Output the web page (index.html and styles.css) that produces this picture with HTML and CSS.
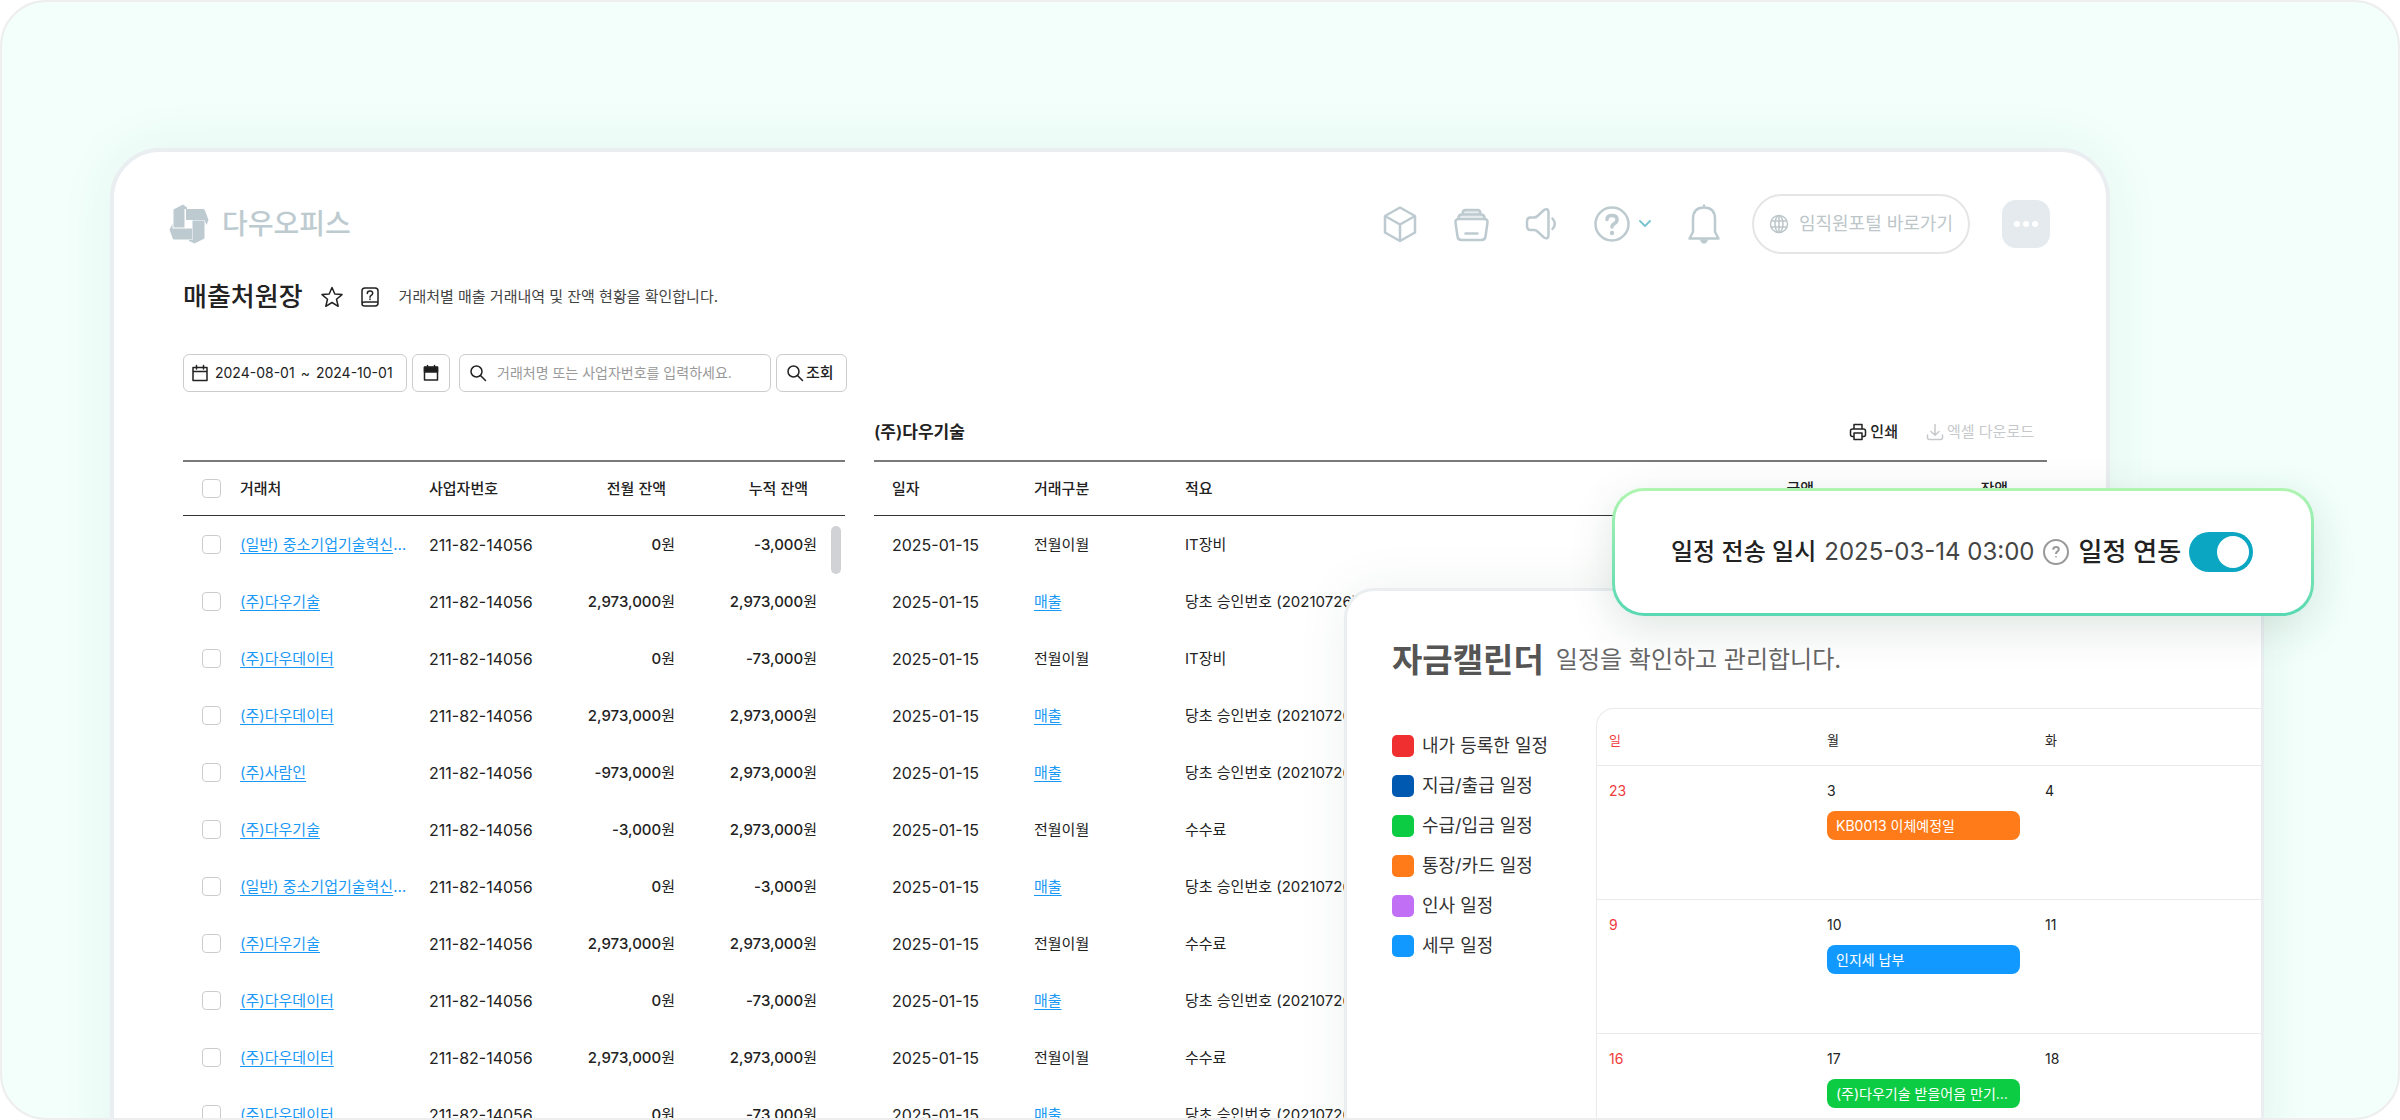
FILE: index.html
```html
<!DOCTYPE html>
<html lang="ko">
<head>
    <meta charset="UTF-8">
    <meta name="viewport" content="width=device-width, initial-scale=1.0">
    <title>매출처원장 - 다우오피스</title>
    <link rel="stylesheet" href="styles.css">
</head>
<body>
    <div class="stage">
        <main class="window">
            <header class="topbar">
                <a href="#" class="logo">
                    <svg width="40" height="40" viewBox="0 0 40 40" fill="#bdcbd0">
                        <path d="M4.500 5.500 L14 0.500 L18 3.500 L18 5 L15.500 5 L15.500 23.500 L4.500 23.500 Z"/>
                        <path d="M17 5 L34 5 Q35.500 5 36 6.500 L39.500 16 L37.500 21 L35.500 16 L17 16 Z"/>
                        <path d="M35.500 16.500 L35.500 34.500 L25.500 39.500 L20 37 L20 36 L23.500 36 L23.500 16.500 Z"/>
                        <path d="M3.500 20 L3.500 24.500 L23 24.500 L23 35.500 L5.500 35.500 Q4 35.500 3.500 34 L0.500 25.500 Z"/>
                    </svg>
                    <span>다우오피스</span>
                </a>
                <nav class="tools">
                    <button class="tool" aria-label="모듈">
                        <svg width="36" height="40" viewBox="0 0 36 40"><path d="M18 3.500 L33 12 V28.500 L18 37 L3 28.500 V12 Z M3 12 L18 20.500 L33 12 M18 20.500 V37"/></svg>
                    </button>
                    <button class="tool" aria-label="보관함">
                        <svg width="36" height="40" viewBox="0 0 36 40"><path d="M6 15 H31 Q35 15 34.500 18.500 L32.500 32.500 Q32 36 28.500 36 H8.500 Q5 36 4.500 32.500 L2.500 18.500 Q2 15 6 15 Z M12.500 29.500 H24.500"/><path d="M5.500 14 Q5.500 10.500 9 10.500 H28 Q31.500 10.500 31.500 14 M9.500 10 Q9.500 6 12.500 6 H24.500 Q27.500 6 27.500 10" fill="#e4eaed"/></svg>
                    </button>
                    <button class="tool" aria-label="공지">
                        <svg width="34" height="40" viewBox="0 0 34 40"><path d="M3 17.500 Q3 13.500 6.500 13.500 H10 Q12 13.500 13.500 12 L20 6 Q24.500 3.500 24.500 8.500 V31 Q24.500 36 20 33.500 L13.500 27.500 Q12 26 10 26 H6.500 Q3 26 3 22 Z M28.500 14.500 Q33 20 28.500 25"/></svg>
                    </button>
                    <button class="tool tool-help" aria-label="도움말">
                        <svg width="38" height="40" viewBox="0 0 38 40"><circle cx="19" cy="20" r="16.500"/><path d="M14 15.500 Q14 11.500 19 11.500 Q24 11.500 24 15.500 Q24 18 21.500 19.500 Q19 21 19 23" stroke-width="3.500"/><circle cx="19" cy="29" r="1"/></svg>
                        <svg class="chevron" width="14" height="10" viewBox="0 0 14 10"><path d="M2 2 L7 7 L12 2"/></svg>
                    </button>
                    <button class="tool" aria-label="알림">
                        <svg width="34" height="44" viewBox="0 0 34 44"><path d="M17 3.500 V5 M2.500 36.500 L6 30 V17 Q6 5.500 17 5.500 Q28 5.500 28 17 V30 L31.500 36.500 Z"/><path d="M14.500 38.500 Q17 42.500 19.500 38.500 Z" fill="#bdcbd0"/></svg>
                    </button>
                    <button class="portal">
                        <svg width="20" height="20" viewBox="0 0 20 20"><circle cx="10" cy="10" r="8.500"/><ellipse cx="10" cy="10" rx="4" ry="8.500"/><path d="M2 7 H18 M2 13 H18 M10 2 V18"/></svg>
                        임직원포털 바로가기
                    </button>
                    <button class="more" aria-label="더보기">
                        <svg width="26" height="8" viewBox="0 0 26 8" fill="#fff"><circle cx="4" cy="4" r="3"/><circle cx="13" cy="4" r="3"/><circle cx="22" cy="4" r="3"/></svg>
                    </button>
                </nav>
            </header>

            <div class="page-title">
                <h1>매출처원장</h1>
                <button class="icon-btn" aria-label="즐겨찾기">
                    <svg width="24" height="24" viewBox="0 0 24 24"><path d="M12 2.500 L14.800 9 L22 9.600 L16.500 14.300 L18.200 21.300 L12 17.500 L5.800 21.300 L7.500 14.300 L2 9.600 L9.200 9 Z"/></svg>
                </button>
                <button class="icon-btn" aria-label="도움말">
                    <svg width="24" height="24" viewBox="0 0 24 24"><path d="M4 18 V6 Q4 3 7 3 H17 Q20 3 20 6 V18 M7 17 H20 V18 Q20 21 17 21 H7 Q4 21 4 19 Q4 17 7 17 Z M9.300 8.500 Q9.300 6 12 6 Q14.700 6 14.700 8.200 Q14.700 9.500 13.200 10.300 Q12 11 12 12.300 M12 14.100 V14.600"/></svg>
                </button>
                <p>거래처별 매출 거래내역 및 잔액 현황을 확인합니다.</p>
            </div>

            <form class="filters">
                <button type="button" class="box date-range">
                    <svg width="18" height="18" viewBox="0 0 18 18"><path d="M2 3.500 H16 V16.500 H2 Z M2 7.500 H16 M5.500 1.500 V5 M12.500 1.500 V5"/></svg>
                    <span>2024-08-01</span>~<span>2024-10-01</span>
                </button>
                <button type="button" class="box calendar-btn" aria-label="날짜 선택">
                    <svg width="18" height="18" viewBox="0 0 18 18"><path d="M2.500 3.500 H15.500 V16 H2.500 Z M5.500 1.500 V4 M12.500 1.500 V4"/><path d="M2.500 3 H15.500 V8 H2.500 Z" fill="#1c1c1e"/></svg>
                </button>
                <label class="box search">
                    <svg width="18" height="18" viewBox="0 0 18 18"><circle cx="7.500" cy="7.500" r="5.500"/><path d="M11.500 11.500 L16.500 16.500"/></svg>
                    <input type="text" aria-label="거래처 검색" placeholder="거래처명 또는 사업자번호를 입력하세요.">
                </label>
                <button type="button" class="box submit">
                    <svg width="18" height="18" viewBox="0 0 18 18"><circle cx="7.500" cy="7.500" r="5.500"/><path d="M11.500 11.500 L16.500 16.500"/></svg>
                    조회
                </button>
            </form>

            <div class="ledger">
                <section class="panel">
                    <div class="panel-head"></div>
                    <table class="accounts">
                        <colgroup><col class="c-check"><col class="c-name"><col class="c-no"><col class="c-prev"><col class="c-sum"><col></colgroup>
                        <thead>
                            <tr><th><input type="checkbox" aria-label="전체 선택"></th><th>거래처</th><th>사업자번호</th><th class="num">전월 잔액</th><th class="num">누적 잔액</th><th></th></tr>
                        </thead>
                        <tbody>
                            <tr><td><input type="checkbox" aria-label="선택"></td><td class="name"><a href="#">(일반) 중소기업기술혁신협회</a></td><td class="code">211-82-14056</td><td class="num"><b>0</b>원</td><td class="num"><b>-3,000</b>원</td><td></td></tr>
                            <tr><td><input type="checkbox" aria-label="선택"></td><td class="name"><a href="#">(주)다우기술</a></td><td class="code">211-82-14056</td><td class="num"><b>2,973,000</b>원</td><td class="num"><b>2,973,000</b>원</td><td></td></tr>
                            <tr><td><input type="checkbox" aria-label="선택"></td><td class="name"><a href="#">(주)다우데이터</a></td><td class="code">211-82-14056</td><td class="num"><b>0</b>원</td><td class="num"><b>-73,000</b>원</td><td></td></tr>
                            <tr><td><input type="checkbox" aria-label="선택"></td><td class="name"><a href="#">(주)다우데이터</a></td><td class="code">211-82-14056</td><td class="num"><b>2,973,000</b>원</td><td class="num"><b>2,973,000</b>원</td><td></td></tr>
                            <tr><td><input type="checkbox" aria-label="선택"></td><td class="name"><a href="#">(주)사람인</a></td><td class="code">211-82-14056</td><td class="num"><b>-973,000</b>원</td><td class="num"><b>2,973,000</b>원</td><td></td></tr>
                            <tr><td><input type="checkbox" aria-label="선택"></td><td class="name"><a href="#">(주)다우기술</a></td><td class="code">211-82-14056</td><td class="num"><b>-3,000</b>원</td><td class="num"><b>2,973,000</b>원</td><td></td></tr>
                            <tr><td><input type="checkbox" aria-label="선택"></td><td class="name"><a href="#">(일반) 중소기업기술혁신협회</a></td><td class="code">211-82-14056</td><td class="num"><b>0</b>원</td><td class="num"><b>-3,000</b>원</td><td></td></tr>
                            <tr><td><input type="checkbox" aria-label="선택"></td><td class="name"><a href="#">(주)다우기술</a></td><td class="code">211-82-14056</td><td class="num"><b>2,973,000</b>원</td><td class="num"><b>2,973,000</b>원</td><td></td></tr>
                            <tr><td><input type="checkbox" aria-label="선택"></td><td class="name"><a href="#">(주)다우데이터</a></td><td class="code">211-82-14056</td><td class="num"><b>0</b>원</td><td class="num"><b>-73,000</b>원</td><td></td></tr>
                            <tr><td><input type="checkbox" aria-label="선택"></td><td class="name"><a href="#">(주)다우데이터</a></td><td class="code">211-82-14056</td><td class="num"><b>2,973,000</b>원</td><td class="num"><b>2,973,000</b>원</td><td></td></tr>
                            <tr><td><input type="checkbox" aria-label="선택"></td><td class="name"><a href="#">(주)다우데이터</a></td><td class="code">211-82-14056</td><td class="num"><b>0</b>원</td><td class="num"><b>-73,000</b>원</td><td></td></tr>
                        </tbody>
                    </table>
                    <span class="scroll-thumb"></span>
                </section>

                <section class="panel">
                    <div class="panel-head">
                        <h2>(주)다우기술</h2>
                        <button class="action">
                            <svg width="18" height="18" viewBox="0 0 18 18"><path d="M5 6 V1.500 H13 V6 M5 13.500 H3.500 Q1.500 13.500 1.500 11.500 V8 Q1.500 6 3.500 6 H14.500 Q16.500 6 16.500 8 V11.500 Q16.500 13.500 14.500 13.500 H13 M5 10 H13 V16.500 H5 Z"/></svg>
                            인쇄
                        </button>
                        <button class="action" disabled>
                            <svg width="18" height="18" viewBox="0 0 18 18"><path d="M9 1.500 V12 M5 8.500 L9 12.300 L13 8.500 M1.500 12 V14.500 Q1.500 16.500 3.500 16.500 H14.500 Q16.500 16.500 16.500 14.500 V12"/></svg>
                            엑셀 다운로드
                        </button>
                    </div>
                    <table class="entries">
                        <colgroup><col class="c-date"><col class="c-type"><col class="c-memo"><col class="c-amount"><col class="c-balance"><col></colgroup>
                        <thead>
                            <tr><th>일자</th><th>거래구분</th><th>적요</th><th class="num">금액</th><th class="num">잔액</th><th></th></tr>
                        </thead>
                        <tbody>
                            <tr><td class="code">2025-01-15</td><td>전월이월</td><td>IT장비</td><td></td><td></td><td></td></tr>
                            <tr><td class="code">2025-01-15</td><td><a href="#">매출</a></td><td>당초 승인번호 (20210726)</td><td></td><td></td><td></td></tr>
                            <tr><td class="code">2025-01-15</td><td>전월이월</td><td>IT장비</td><td></td><td></td><td></td></tr>
                            <tr><td class="code">2025-01-15</td><td><a href="#">매출</a></td><td>당초 승인번호 (20210726)</td><td></td><td></td><td></td></tr>
                            <tr><td class="code">2025-01-15</td><td><a href="#">매출</a></td><td>당초 승인번호 (20210726)</td><td></td><td></td><td></td></tr>
                            <tr><td class="code">2025-01-15</td><td>전월이월</td><td>수수료</td><td></td><td></td><td></td></tr>
                            <tr><td class="code">2025-01-15</td><td><a href="#">매출</a></td><td>당초 승인번호 (20210726)</td><td></td><td></td><td></td></tr>
                            <tr><td class="code">2025-01-15</td><td>전월이월</td><td>수수료</td><td></td><td></td><td></td></tr>
                            <tr><td class="code">2025-01-15</td><td><a href="#">매출</a></td><td>당초 승인번호 (20210726)</td><td></td><td></td><td></td></tr>
                            <tr><td class="code">2025-01-15</td><td>전월이월</td><td>수수료</td><td></td><td></td><td></td></tr>
                            <tr><td class="code">2025-01-15</td><td><a href="#">매출</a></td><td>당초 승인번호 (20210726)</td><td></td><td></td><td></td></tr>
                        </tbody>
                    </table>
                </section>
            </div>
        </main>

        <!-- fund calendar -->
        <aside class="calendar-card">
            <div class="calendar-title">
                <h2>자금캘린더</h2>
                <p>일정을 확인하고 관리합니다.</p>
            </div>
            <div class="calendar-body">
                <ul class="legend">
                    <li><i class="red"></i>내가 등록한 일정</li>
                    <li><i class="navy"></i>지급/출급 일정</li>
                    <li><i class="green"></i>수급/입금 일정</li>
                    <li><i class="orange"></i>통장/카드 일정</li>
                    <li><i class="purple"></i>인사 일정</li>
                    <li><i class="blue"></i>세무 일정</li>
                </ul>
                <div class="month">
                    <table>
                        <thead>
                            <tr><th class="sun">일</th><th>월</th><th>화</th></tr>
                        </thead>
                        <tbody>
                            <tr><td class="sun">23</td><td>3<span class="event orange">KB0013 이체예정일</span></td><td>4</td></tr>
                            <tr><td class="sun">9</td><td>10<span class="event blue">인지세 납부</span></td><td>11</td></tr>
                            <tr><td class="sun">16</td><td>17<span class="event green">(주)다우기술 받을어음 만기도래</span><span class="event blue"></span></td><td>18</td></tr>
                        </tbody>
                    </table>
                </div>
            </div>
        </aside>

        <!-- schedule sync -->
        <div class="sync">
            <strong>일정 전송 일시</strong>
            <time>2025-03-14 03:00</time>
            <svg width="26" height="26" viewBox="0 0 26 26"><circle cx="13" cy="13" r="12"/><path d="M10.200 10.700 Q10.200 8 13 8 Q15.800 8 15.800 10.300 Q15.800 11.700 14.300 12.600 Q13 13.400 13 14.900 M13 17.300 V18.300"/></svg>
            <label class="sync-toggle" for="sync-on">일정 연동</label>
            <input type="checkbox" role="switch" id="sync-on" class="switch" checked>
        </div>
    </div>
</body>
</html>
```
FILE: styles.css
```css
* {
    margin: 0;
    padding: 0;
    box-sizing: border-box;
}

body {
    font-family: Inter, "Noto Sans CJK KR", sans-serif;
    font-size: 15px;
    line-height: 20px;
    color: #222;
    background: #fff;
}

button, input {
    font: inherit;
    color: inherit;
}

button {
    background: none;
    border: none;
    white-space: nowrap;
    cursor: pointer;
}

svg {
    display: block;
    flex: none;
    overflow: visible;
}

a {
    color: #1a98f5;
    text-underline-offset: 3px;
}

.stage {
    position: relative;
    height: 100vh;
    overflow: hidden;
    padding: 146px 288px 0 108px;
    background: #f2fffb;
    border: 2px solid #eee;
    border-radius: 46px;
}

.window {
    height: 1100px;
    padding: 42px 59px 0 69px;
    background: #fff;
    border: 4px solid #eaeef1;
    border-radius: 50px;
    box-shadow: 0 0 60px rgba(40, 110, 70, 0.06);
}

/* top bar */
.topbar {
    display: flex;
    align-items: center;
    justify-content: space-between;
    height: 60px;
    margin: 0 -3px 0 -14px;
}

.logo {
    display: flex;
    align-items: center;
    gap: 13px;
    font-size: 28px;
    font-weight: 500;
    line-height: 40px;
    color: #bdcbd0;
    text-decoration: none;
}

.tools {
    display: flex;
    align-items: center;
}

.tool {
    display: flex;
    align-items: center;
    margin-right: 35px;
}

.tool svg {
    fill: none;
    stroke: #bdcbd0;
    stroke-width: 2.5;
    stroke-linecap: round;
    stroke-linejoin: round;
}

.tool .chevron {
    margin-left: 7px;
    stroke: #7cc5d1;
    stroke-width: 2;
}

.portal {
    display: flex;
    align-items: center;
    gap: 10px;
    height: 60px;
    margin-left: -4px;
    padding: 0 15px;
    font-size: 18px;
    color: #bcc6c9;
    border: 2px solid #e5e5e5;
    border-radius: 30px;
}

.portal svg {
    fill: none;
    stroke: #bcc6c9;
    stroke-width: 1.5;
}

.more {
    display: flex;
    align-items: center;
    justify-content: center;
    width: 48px;
    height: 48px;
    margin-left: 32px;
    background: #e4eaed;
    border-radius: 14px;
}

/* page title */
.page-title {
    display: flex;
    align-items: center;
    height: 40px;
    margin-top: 23px;
}

.page-title h1 {
    margin-right: 17px;
    font-size: 26px;
    font-weight: 500;
    line-height: 40px;
}

.page-title p {
    margin-left: 3px;
    color: #444;
}

.icon-btn {
    margin-right: 14px;
}

.icon-btn svg, .box svg, .action svg {
    fill: none;
    stroke: currentColor;
    stroke-width: 1.5;
    stroke-linejoin: round;
    stroke-linecap: round;
}

/* filters */
.filters {
    display: flex;
    gap: 5px;
    margin-top: 37px;
}

.box {
    display: flex;
    align-items: center;
    gap: 6px;
    height: 38px;
    padding: 0 7px;
    border: 1px solid #ccc;
    border-radius: 6px;
}

.date-range {
    width: 224px;
    font-size: 14px;
}

.calendar-btn {
    width: 38px;
    justify-content: center;
    margin-right: 4px;
}

.search {
    width: 312px;
    gap: 10px;
    padding: 0 9px;
}

.search input {
    flex: 1;
    min-width: 0;
    font-size: 14px;
    border: none;
    outline: none;
}

.search input::placeholder {
    color: #999;
}

.submit {
    width: 71px;
    gap: 2px;
    padding: 0 9px;
    font-weight: 500;
}

/* ledger tables */
.ledger {
    display: grid;
    grid-template-columns: 662fr 1173fr;
    gap: 29px;
}

.panel {
    position: relative;
    min-width: 0;
}

.panel-head {
    display: flex;
    align-items: center;
    gap: 28px;
    height: 68px;
    padding: 12px 13px 0 0;
}

.panel-head h2 {
    margin-right: auto;
    font-size: 17px;
    font-weight: 600;
}

.action {
    display: flex;
    align-items: center;
    gap: 3px;
    font-weight: 500;
}

.action:disabled {
    color: #c6c9cc;
    font-weight: 400;
}

.accounts, .entries {
    width: 100%;
    table-layout: fixed;
    border-collapse: separate;
    border-spacing: 0;
}

.accounts th, .entries th {
    height: 56px;
    text-align: left;
    font-weight: 500;
    border-top: 2px solid #7a7a7a;
    border-bottom: 1px solid #333;
}

.accounts td, .entries td {
    height: 57px;
    white-space: nowrap;
}

.accounts th:first-child, .accounts td:first-child {
    padding-left: 19px;
}

.accounts .num, .entries .num {
    text-align: right;
}

.accounts th.num {
    padding-right: 9px;
}

.accounts b {
    font-weight: 500;
}

.accounts .name {
    overflow: hidden;
    padding-right: 20px;
    text-overflow: ellipsis;
    color: #1a98f5;
}

.accounts .code, .entries .code {
    font-size: 16px;
}

.c-check { width: 57px; }
.c-name { width: 189px; }
.c-no { width: 131px; }
.c-prev { width: 115px; }
.c-sum { width: 142px; }

.entries th:first-child, .entries td:first-child {
    padding-left: 18px;
}

.c-date { width: 160px; }
.c-type { width: 151px; }
.c-memo { width: 481px; }
.c-amount { width: 148px; }
.c-balance { width: 194px; }

.accounts input {
    display: block;
    width: 19px;
    height: 19px;
    appearance: none;
    background: #fff;
    border: 1px solid #ccc;
    border-radius: 4px;
}

.scroll-thumb {
    position: absolute;
    top: 134px;
    right: 4px;
    width: 10px;
    height: 48px;
    background: #d0d2d6;
    border-radius: 5px;
}

/* calendar card */
.calendar-card {
    position: absolute;
    top: 586px;
    right: 134px;
    bottom: -40px;
    width: 920px;
    padding: 46px 0 0 45px;
    overflow: hidden;
    background: #fff;
    border: 3px solid #eaeef1;
    border-radius: 30px;
    box-shadow: 0 0 50px rgba(40, 90, 60, 0.08);
}

.calendar-title {
    display: flex;
    align-items: center;
    gap: 12px;
    height: 46px;
    color: #555;
}

.calendar-title h2 {
    font-size: 33px;
    font-weight: 700;
    line-height: 46px;
}

.calendar-title p {
    font-size: 24px;
    line-height: 46px;
    color: #666;
}

.calendar-body {
    display: flex;
    margin-top: 25px;
}

.legend {
    width: 204px;
    padding-top: 18px;
    list-style: none;
}

.legend li {
    display: flex;
    align-items: center;
    gap: 8px;
    height: 40px;
    font-size: 18px;
    color: #333;
}

.legend i {
    width: 22px;
    height: 22px;
    border-radius: 5px;
}

.red { background: #f03030; }
.navy { background: #0059b0; }
.green { background: #0ccc44; }
.orange { background: #ff7b1a; }
.purple { background: #c170f5; }
.blue { background: #1199ff; }

.month {
    flex: 1;
    border-top: 1px solid #eaeaec;
    border-left: 1px solid #eaeaec;
    border-radius: 18px 0 0 0;
}

.month table {
    width: 100%;
    table-layout: fixed;
    border-collapse: separate;
    border-spacing: 0;
    font-size: 14px;
}

.month th, .month td {
    width: 218px;
    padding-left: 12px;
    text-align: left;
    border-bottom: 1px solid #eaeaec;
}

.month th:last-child, .month td:last-child {
    width: auto;
}

.month th {
    height: 57px;
    padding-top: 6px;
    font-size: 13px;
    font-weight: 400;
}

.month td {
    height: 134px;
    padding-top: 15px;
    padding-right: 13px;
    vertical-align: top;
}

.month .sun {
    color: #f03b3b;
}

.event {
    display: block;
    height: 29px;
    margin: 10px 0 8px;
    padding: 0 9px;
    overflow: hidden;
    line-height: 29px;
    white-space: nowrap;
    text-overflow: ellipsis;
    color: #fff;
    border-radius: 8px;
}

/* schedule sync bar */
.sync {
    position: absolute;
    top: 486px;
    right: 84px;
    display: flex;
    align-items: center;
    width: 702px;
    height: 128px;
    padding: 0 56px 0 56px;
    font-size: 24px;
    line-height: 40px;
    white-space: nowrap;
    border: 3px solid transparent;
    border-radius: 32px;
    background: linear-gradient(#fff, #fff) padding-box, linear-gradient(#b0f5b0, #58d8b3) border-box;
    box-shadow: 0 12px 44px rgba(20, 70, 45, 0.14);
}

.sync strong {
    font-weight: 500;
}

.sync time {
    margin: 0 8px;
    color: #444;
}

.sync svg {
    fill: none;
    stroke: #999;
    stroke-width: 2;
}

.sync-toggle {
    margin: 0 8px 0 10px;
    font-size: 26px;
    font-weight: 500;
}

.switch {
    flex: none;
    width: 64px;
    height: 40px;
    padding: 4px;
    appearance: none;
    background: #0aa6c2;
    border-radius: 20px;
}

.switch::before {
    content: "";
    display: block;
    width: 32px;
    height: 32px;
    margin-left: auto;
    background: #fff;
    border-radius: 50%;
}
```
